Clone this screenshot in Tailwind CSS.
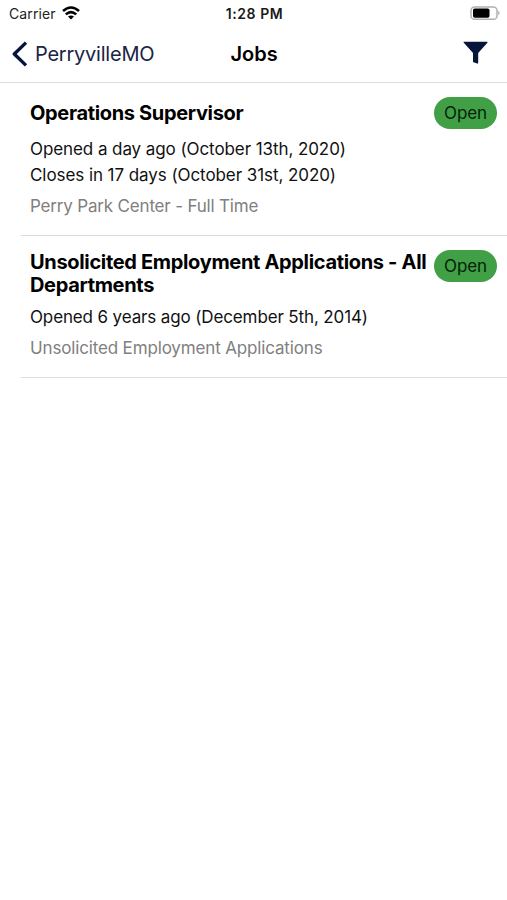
<!DOCTYPE html>
<html lang="en"><head><meta charset="utf-8"><title>Jobs</title>
<script src="https://cdn.jsdelivr.net/npm/@tailwindcss/browser@4"></script></head>
<body class="bg-white text-black font-['Inter',sans-serif] w-[507px] h-[900px] overflow-hidden">
<header class="h-[83px] border-b border-[#dcdcdc] bg-white">
<div class="grid grid-cols-[1fr_auto_1fr] items-center h-[27px] pl-[9px] pr-[7px]">
<div class="flex items-center gap-[6px]"><span class="text-[14px] leading-5 tracking-[0.12px] text-[#222]">Carrier</span>
<svg class="w-[18px] h-[14px] mb-px" viewBox="0 0 18 14" fill="none" stroke="#000" stroke-width="2.6"><path d="M1 5Q9-2 17 5M3.8 8.4Q9 3.8 14.2 8.4"/><path d="M9 13.5L6 10.6Q9 8.2 12 10.6Z" fill="#000" stroke="none"/></svg></div>
<div class="text-center text-[14px] font-semibold leading-5 tracking-[0.6px] whitespace-nowrap text-[#1a1a1a]">1:28 PM</div>
<svg class="w-[30px] h-[14px] justify-self-end mb-px" viewBox="0 0 30 14"><rect x="1" y=".9" width="26" height="12.4" rx="3.6" fill="none" stroke="#b0b0b0" stroke-width="1.5"/><rect x="3" y="2.5" width="16.5" height="9.2" rx="1.8" fill="#000"/><path d="M28.2 4.8Q31 7 28.2 9.2Z" fill="#aaa"/></svg>
</div>
<div class="grid grid-cols-[1fr_auto_1fr] items-center h-[54px] pl-[12px] pr-[12px]">
<div class="flex items-center gap-[7px] text-[#1a2444]"><svg class="w-[16px] h-[26px] shrink-0" viewBox="0 0 16 26" fill="none" stroke="#06163a" stroke-width="3.4" stroke-linejoin="round"><path d="M14 1.6L2.3 13L14 24.4"/></svg><span class="text-[20px] leading-6 tracking-[-0.23px]">PerryvilleMO</span></div>
<div class="text-center text-[20px] font-semibold leading-6 pl-px">Jobs</div>
<svg class="w-[25px] h-[23px] justify-self-end mr-[7px] mb-[3px]" viewBox="0 0 25 23" fill="#06163a"><path d="M.8 .8H24Q25 .8 24.4 1.8L15.2 12V21.6Q15.2 23 14.2 22.5L10.4 21.2Q10 21 10 20.2V12L.8 1.8Q.2 .8 .8 .8Z"/></svg>
</div></header>
<main class="pl-[21px]">
<article class="flex justify-between h-[153px] border-b border-[#dcdcdc] pl-[9px] pr-[10px] pt-[14px]">
<div class="whitespace-nowrap"><h2 class="text-[20px] font-bold leading-[33px] tracking-[-0.34px]">Operations Supervisor</h2><p class="text-[17px] leading-[26px] tracking-[-0.08px] mt-[6px] text-[#111]">Opened a day ago (October 13th, 2020)</p><p class="text-[17px] leading-[26px] tracking-[-0.07px] text-[#111]">Closes in 17 days (October 31st, 2020)</p><p class="text-[17px] leading-[26px] tracking-[-0.18px] mt-[5px] text-[#808080]">Perry Park Center - Full Time</p></div>
<span class="w-[63px] h-[32px] shrink-0 rounded-full bg-[#41a045] text-center text-[17px] tracking-[-0.1px] leading-[32px] text-[#04220a]">Open</span></article>
<article class="flex justify-between h-[142px] border-b border-[#dcdcdc] pl-[9px] pr-[10px] pt-[14px]">
<div class="whitespace-nowrap"><h2 class="text-[20px] font-bold leading-[23px] tracking-[-0.33px] pt-px">Unsolicited Employment Applications - All<br>Departments</h2><p class="text-[17px] leading-[26px] tracking-[-0.13px] mt-[7px] text-[#111]">Opened 6 years ago (December 5th, 2014)</p><p class="text-[17px] leading-[26px] tracking-[-0.15px] mt-[5px] text-[#808080]">Unsolicited Employment Applications</p></div>
<span class="w-[63px] h-[32px] shrink-0 rounded-full bg-[#41a045] text-center text-[17px] tracking-[-0.1px] leading-[32px] text-[#04220a]">Open</span></article>
</main></body></html>
